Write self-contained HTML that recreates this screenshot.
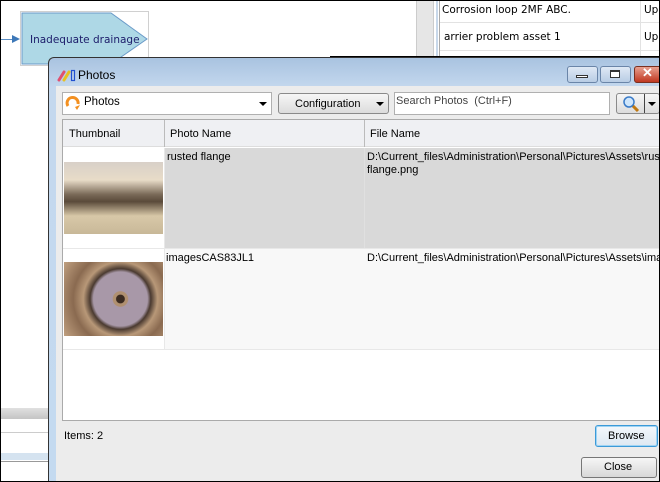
<!DOCTYPE html>
<html style="overflow:hidden"><head><style>
*{box-sizing:border-box;margin:0;padding:0}
html,body{width:660px;height:482px;overflow:hidden}
body{position:relative;background:#fff;font-family:"Liberation Sans",sans-serif;font-size:11px;color:#000}
.a{position:absolute}
.t{font-family:"DejaVu Sans","Liberation Sans",sans-serif;font-size:10.5px}
</style></head><body>
<div class="a" style="left:0;top:0;width:660px;height:482px;border:1px solid #000;z-index:50;pointer-events:none"></div>
<div class="a" style="left:0;top:39px;width:14px;height:1px;background:#5b8ec4"></div>
<div class="a" style="left:12px;top:35px;width:0;height:0;border-left:8px solid #3d78b8;border-top:4px solid transparent;border-bottom:4px solid transparent"></div>
<div class="a" style="left:20px;top:11px;width:129px;height:55px;border:1px solid #d0d0d0;background:#fff"></div>
<svg class="a" style="left:21px;top:12px" width="128" height="54"><polygon points="1,1 90,1 126,27 90,52 1,52" fill="#aed8e6" stroke="#6a9ac8" stroke-width="1"/></svg>
<div class="a t" style="left:30px;top:34px;color:#1c1c6a">Inadequate drainage</div>
<div class="a" style="left:416px;top:0;width:18px;height:57px;background:#e6e6e6;border-left:1px solid #ccc;border-right:1px solid #ccc"></div>
<div class="a" style="left:436px;top:0;width:2px;height:57px;background:#c8d8ea"></div>
<div class="a" style="left:439px;top:0;width:221px;height:57px;border-left:1px solid #aaa"></div>
<div class="a t" style="left:442px;top:4px">Corrosion loop 2MF ABC.</div>
<div class="a t" style="left:644px;top:4px">Upd</div>
<div class="a" style="left:440px;top:22px;width:220px;height:1px;background:#e2e2e2"></div>
<div class="a t" style="left:444px;top:31px">arrier problem asset 1</div>
<div class="a t" style="left:644px;top:31px">Upd</div>
<div class="a" style="left:440px;top:50px;width:220px;height:1px;background:#e2e2e2"></div>
<div class="a" style="left:640px;top:0;width:1px;height:57px;background:#e2e2e2"></div>
<div class="a" style="left:330px;top:56px;width:330px;height:1px;background:#000"></div>
<div class="a" style="left:0;top:408px;width:48px;height:11px;background:linear-gradient(#e0e0e0,#c4c4c4)"></div>
<div class="a" style="left:0;top:432px;width:48px;height:1px;background:#ccc"></div>
<div class="a" style="left:0;top:453px;width:48px;height:7px;background:#d5e3f0"></div>
<div class="a" style="left:0;top:461px;width:48px;height:1px;background:#999"></div>
<div class="a" style="left:48px;top:57px;width:612px;height:425px;border:1px solid #333;border-bottom:none;border-right:none;border-radius:6px 0 0 0;background:linear-gradient(#a9c3e0,#c4d8ee 30px,#c4daf0)"></div>
<svg class="a" style="left:57px;top:68px" width="20" height="14"><path d="M2 12 L7 4" stroke="#e05070" stroke-width="3" stroke-linecap="round"/><path d="M7 12 L12 4" stroke="#e8c020" stroke-width="3" stroke-linecap="round"/><rect x="14.5" y="2.5" width="3" height="10" fill="none" stroke="#2050d0" stroke-width="1.2"/></svg>
<div class="a" style="left:78px;top:68px;font-size:12px">Photos</div>
<div class="a" style="left:567px;top:66px;width:31px;height:17px;border:1px solid #6a85a8;border-radius:3px;background:linear-gradient(#dfe9f5,#b8cce4)"></div>
<div class="a" style="left:576px;top:75px;width:12px;height:3px;border:1px solid #333;background:#fff"></div>
<div class="a" style="left:600px;top:66px;width:31px;height:17px;border:1px solid #6a85a8;border-radius:3px;background:linear-gradient(#dfe9f5,#b8cce4)"></div>
<div class="a" style="left:610px;top:70px;width:10px;height:8px;border:1px solid #333;border-top-width:2px;background:#fff"></div>
<div class="a" style="left:634px;top:66px;width:30px;height:17px;border:1px solid #7a3020;border-radius:3px;background:linear-gradient(#e8a090,#c03820)"></div>
<div class="a" style="left:642px;top:65px;color:#fff;font-weight:bold;font-size:13px">✕</div>
<div class="a" style="left:56px;top:86px;width:604px;height:396px;background:#ececec"></div>
<div class="a" style="left:62px;top:92px;width:210px;height:23px;border:1px solid #b0b0b0;background:#fff"></div>
<svg class="a" style="left:65px;top:95px" width="16" height="16"><path d="M3 11 A5.5 5.5 0 1 1 13 9" fill="none" stroke="#f39020" stroke-width="3"/><path d="M10 12 L15 10 L12 15Z" fill="#f39020"/></svg>
<div class="a" style="left:84px;top:96px;font-size:11.5px">Photos</div>
<div class="a" style="left:259px;top:102px;border-top:4px solid #000;border-left:4px solid transparent;border-right:4px solid transparent"></div>
<div class="a" style="left:278px;top:93px;width:111px;height:21px;border:1px solid #8a8a8a;border-radius:3px;background:linear-gradient(#f6f6f6,#dcdcdc)"></div>
<div class="a" style="left:295px;top:98px;font-size:11px">Configuration</div>
<div class="a" style="left:376px;top:102px;border-top:4px solid #000;border-left:4px solid transparent;border-right:4px solid transparent"></div>
<div class="a" style="left:394px;top:92px;width:216px;height:23px;border:1px solid #b0b0b0;background:#fff"></div>
<div class="a" style="left:396px;top:95px;color:#444;font-size:11px">Search Photos&nbsp; (Ctrl+F)</div>
<div class="a" style="left:616px;top:93px;width:44px;height:21px;border:1px solid #8a8a8a;border-radius:3px;background:linear-gradient(#f6f6f6,#dcdcdc)"></div>
<div class="a" style="left:644px;top:94px;width:1px;height:19px;background:#444"></div>
<svg class="a" style="left:622px;top:95px" width="18" height="18"><path d="M10 10 L16 16" stroke="#c07810" stroke-width="3"/><circle cx="7" cy="7" r="5" fill="#cfe6fb" stroke="#3a7bc8" stroke-width="1.5"/></svg>
<div class="a" style="left:648px;top:102px;border-top:4px solid #000;border-left:4px solid transparent;border-right:4px solid transparent"></div>
<div class="a" style="left:62px;top:119px;width:600px;height:302px;border:1px solid #aaa;background:#fff"></div>
<div class="a" style="left:63px;top:120px;width:597px;height:27px;background:#eff0f3;border-bottom:1px solid #ddd"></div>
<div class="a" style="left:164px;top:120px;width:1px;height:27px;background:#bbb"></div>
<div class="a" style="left:364px;top:120px;width:1px;height:27px;background:#bbb"></div>
<div class="a" style="left:69px;top:128px">Thumbnail</div>
<div class="a" style="left:170px;top:128px">Photo Name</div>
<div class="a" style="left:370px;top:128px">File Name</div>
<div class="a" style="left:165px;top:148px;width:495px;height:100px;background:#d9d9d9"></div>
<div class="a" style="left:164px;top:148px;width:1px;height:201px;background:#e8e8e8"></div>
<div class="a" style="left:364px;top:148px;width:1px;height:201px;background:#e0e0e0"></div>
<div class="a" style="left:63px;top:248px;width:597px;height:1px;background:#e8e8e8"></div>
<div class="a" style="left:165px;top:249px;width:495px;height:100px;background:#f8f8f8"></div>
<div class="a" style="left:63px;top:349px;width:597px;height:1px;background:#e8e8e8"></div>
<div class="a" style="left:64px;top:162px;width:99px;height:72px;background:linear-gradient(180deg,#d8d0c8 0%,#e8dcc8 25%,#7a6a58 45%,#5a4a3a 55%,#d8c8a8 75%,#c8b898 100%)"></div>
<div class="a" style="left:64px;top:262px;width:99px;height:74px;background:radial-gradient(circle at 57% 50%,#3a2a20 0 6%,#b09070 7% 11%,#a898a8 12% 40%,#4a3a30 45%,#b89878 55%,#8a6a50 70%,#c0a080 100%)"></div>
<div class="a" style="left:167px;top:151px">rusted flange</div>
<div class="a" style="left:166px;top:252px">imagesCAS83JL1</div>
<div class="a" style="left:367px;top:151px;white-space:nowrap">D:\Current_files\Administration\Personal\Pictures\Assets\rusted</div>
<div class="a" style="left:367px;top:164px">flange.png</div>
<div class="a" style="left:367px;top:252px;white-space:nowrap">D:\Current_files\Administration\Personal\Pictures\Assets\images</div>
<div class="a" style="left:660px;top:119px;width:2px;height:302px;background:#ececec"></div>
<div class="a" style="left:64px;top:430px">Items: 2</div>
<div class="a" style="left:595px;top:425px;width:63px;height:22px;border:1px solid #3c9ad8;border-radius:3px;background:linear-gradient(#f4f8fc,#dde8f2);box-shadow:inset 0 0 0 1px #9fd4f4"></div>
<div class="a" style="left:608px;top:430px">Browse</div>
<div class="a" style="left:581px;top:457px;width:76px;height:21px;border:1px solid #777;border-radius:3px;background:linear-gradient(#f6f6f6,#d8d8d8)"></div>
<div class="a" style="left:604px;top:461px">Close</div>
</body></html>
